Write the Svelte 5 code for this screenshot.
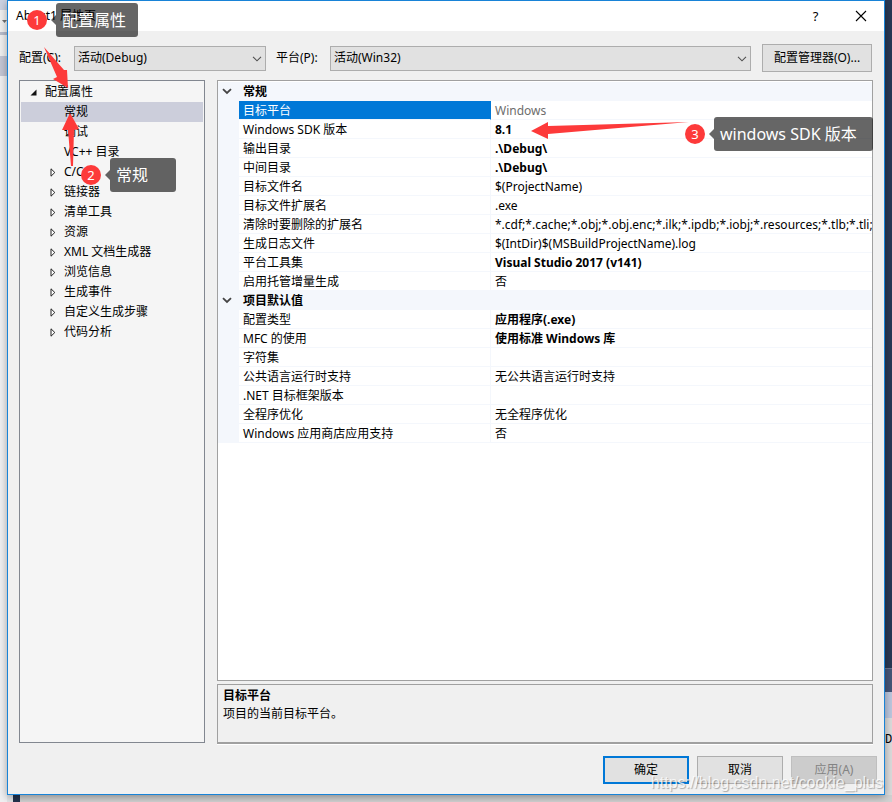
<script lang="ts">
  type Row = { name: string; value: string; bold?: boolean; muted?: boolean }

  const tree: { label: string; expandable?: boolean }[] = [
    { label: '常规' },
    { label: '调试' },
    { label: 'VC++ 目录' },
    { label: 'C/C++', expandable: true },
    { label: '链接器', expandable: true },
    { label: '清单工具', expandable: true },
    { label: '资源', expandable: true },
    { label: 'XML 文档生成器', expandable: true },
    { label: '浏览信息', expandable: true },
    { label: '生成事件', expandable: true },
    { label: '自定义生成步骤', expandable: true },
    { label: '代码分析', expandable: true },
  ]

  const groups: { title: string; rows: Row[] }[] = [
    {
      title: '常规',
      rows: [
        { name: '目标平台', value: 'Windows', muted: true },
        { name: 'Windows SDK 版本', value: '8.1', bold: true },
        { name: '输出目录', value: '.\\Debug\\', bold: true },
        { name: '中间目录', value: '.\\Debug\\', bold: true },
        { name: '目标文件名', value: '$(ProjectName)' },
        { name: '目标文件扩展名', value: '.exe' },
        { name: '清除时要删除的扩展名', value: '*.cdf;*.cache;*.obj;*.obj.enc;*.ilk;*.ipdb;*.iobj;*.resources;*.tlb;*.tli;*.t' },
        { name: '生成日志文件', value: '$(IntDir)$(MSBuildProjectName).log' },
        { name: '平台工具集', value: 'Visual Studio 2017 (v141)', bold: true },
        { name: '启用托管增量生成', value: '否' },
      ],
    },
    {
      title: '项目默认值',
      rows: [
        { name: '配置类型', value: '应用程序(.exe)', bold: true },
        { name: 'MFC 的使用', value: '使用标准 Windows 库', bold: true },
        { name: '字符集', value: '' },
        { name: '公共语言运行时支持', value: '无公共语言运行时支持' },
        { name: '.NET 目标框架版本', value: '' },
        { name: '全程序优化', value: '无全程序优化' },
        { name: 'Windows 应用商店应用支持', value: '否' },
      ],
    },
  ]

  let selectedNode = $state('常规')
  let selectedRow = $state('目标平台')
</script>

<div class="desktop">
  <div class="behind-left">
    <svg width="5" height="3" viewBox="0 0 5 3"><path d="M0 0H5L2.5 3Z" fill="#717171" /></svg>
  </div>
  <div class="behind-right"><span>D</span></div>
  <div class="behind-bottom"></div>

  <main class="dialog">
    <header class="titlebar">
      <h1>About1 属性页</h1>
      <button class="caption" aria-label="帮助">?</button>
      <button class="caption" aria-label="关闭">
        <svg width="12" height="12" viewBox="0 0 12 12"><path d="M1 1L11 11M11 1L1 11" fill="none" stroke="#000" stroke-width="1.1" /></svg>
      </button>
    </header>

    <div class="toolbar">
      <label for="config">配置(C):</label>
      <div class="combo config">
        <select id="config"><option>活动(Debug)</option></select>
        <svg width="10" height="6" viewBox="0 0 10 6"><path d="M1 .8L5 4.8L9 .8" fill="none" stroke="#505050" stroke-width="1.1" /></svg>
      </div>
      <label class="second" for="platform">平台(P):</label>
      <div class="combo platform">
        <select id="platform"><option>活动(Win32)</option></select>
        <svg width="10" height="6" viewBox="0 0 10 6"><path d="M1 .8L5 4.8L9 .8" fill="none" stroke="#505050" stroke-width="1.1" /></svg>
      </div>
      <button class="btn manager">配置管理器(O)...</button>
    </div>

    <div class="content">
      <nav class="tree">
        <div class="root">
          <svg width="7" height="7" viewBox="0 0 7 7"><path d="M6.5 .5V6.5H.5Z" fill="#111" /></svg>
          <span>配置属性</span>
        </div>
        <ul>
          {#each tree as node}
            <li>
              <button class:selected={node.label === selectedNode} onclick={() => (selectedNode = node.label)}>
                <span class="twisty">
                  {#if node.expandable}
                    <svg width="6" height="9" viewBox="0 0 6 9"><path d="M1 .8V8.2L4.8 4.5Z" fill="#fff" stroke="#222" /></svg>
                  {/if}
                </span>
                {node.label}
              </button>
            </li>
          {/each}
        </ul>
      </nav>

      <section class="detail">
        <div class="grid">
          <table>
            <colgroup><col class="c-gutter" /><col class="c-name" /><col /></colgroup>
            {#each groups as group}
              <tbody>
                <tr class="group">
                  <td class="gutter">
                    <svg width="10" height="7" viewBox="0 0 10 7"><path d="M1 1.2L5 5L9 1.2" fill="none" stroke="#444" stroke-width="1.8" /></svg>
                  </td>
                  <th colspan="2">{group.title}</th>
                </tr>
                {#each group.rows as row}
                  <tr class:active={row.name === selectedRow} onclick={() => (selectedRow = row.name)}>
                    <td class="gutter"></td>
                    <td class="name">{row.name}</td>
                    <td class="value" class:bold={row.bold} class:muted={row.muted}>{row.value}</td>
                  </tr>
                {/each}
              </tbody>
            {/each}
          </table>
        </div>
        <div class="description">
          <strong>目标平台</strong>
          <p>项目的当前目标平台。</p>
        </div>
      </section>
    </div>

    <footer>
      <button class="btn primary">确定</button>
      <button class="btn">取消</button>
      <button class="btn" disabled>应用(A)</button>
    </footer>
  </main>

  <svg class="arrow arrow-1" width="28" height="42" viewBox="0 0 28 42"><path d="M0 0L20 23L23 23L24 41L9 32L13 30Z" fill="#fd3a3a" /></svg>
  <svg class="arrow arrow-2" width="18" height="54" viewBox="0 0 18 54"><path d="M8 0L17 16L12 17L11 53H9L6 17H0Z" fill="#fd3a3a" /></svg>
  <svg class="arrow arrow-3" width="158" height="18" viewBox="0 0 158 18"><path d="M0 9L17 0V4L158 0L17 12V17Z" fill="#fd3a3a" /></svg>

  <div class="note note-1"><b>1</b><span>配置属性</span></div>
  <div class="note note-2"><b>2</b><span>常规</span></div>
  <div class="note note-3"><b>3</b><span>windows SDK 版本</span></div>

  <div class="watermark">https://blog.csdn.net/cookie_plus</div>
</div>

<style>
  :global(body) {
    margin: 0;
  }
  .desktop {
    position: relative;
    display: flex;
    box-sizing: border-box;
    min-height: 100vh;
    padding: 0 7px 7px;
    overflow: hidden;
    background: #e4e5e8;
    font: 12px/16px "Noto Sans", "Noto Sans CJK SC", sans-serif;
    color: #000;
  }
  .behind-left {
    position: absolute;
    inset: 0 auto 0 0;
    width: 7px;
    background: linear-gradient(#ccd2e2 0 10px, #f0f0f0 10px 32px, #b7bccb 32px 35px, #f0f0f0 35px 56px, #c4c6d4 56px 76px, #f0f0f2 76px);
  }
  .behind-left svg {
    position: absolute;
    top: 20px;
    left: 2px;
  }
  .behind-right {
    position: absolute;
    inset: 0 0 0 auto;
    width: 7px;
    background: linear-gradient(#293955 0 668px, #6a7690 668px 669px, #465678 669px 692px, #bcc7de 692px 718px, #dcdcdc 718px);
  }
  .behind-right span {
    position: absolute;
    top: 732px;
    left: 0;
    font-family: "Liberation Mono", monospace;
  }
  .behind-bottom {
    position: absolute;
    inset: auto 0 0 13px;
    height: 7px;
    background: #d2d2d2;
    border-left: 7px solid #25334e;
  }
  .dialog {
    position: relative;
    display: flex;
    flex: 1;
    flex-direction: column;
    min-width: 0;
    background: #f0f0f0;
    border: 1px solid #1883d7;
    box-shadow: 0 2px 8px rgba(0, 0, 0, 0.35);
  }
  button,
  select {
    font: inherit;
    color: inherit;
  }
  .titlebar {
    display: flex;
    align-items: center;
    height: 30px;
    padding: 0 1px 0 8px;
    background: #fff;
  }
  h1 {
    flex: 1;
    margin: 0;
    font-size: 12px;
    font-weight: 400;
  }
  .caption {
    display: flex;
    align-items: center;
    justify-content: center;
    width: 45px;
    height: 30px;
    padding: 0;
    background: none;
    border: 0;
    font-size: 13px;
  }
  .toolbar {
    display: flex;
    align-items: center;
    padding: 13px 12px 8px 11px;
  }
  .toolbar label {
    flex: none;
    width: 55px;
  }
  .toolbar .second {
    width: 54px;
    margin-left: 10px;
  }
  .combo {
    position: relative;
    min-width: 0;
  }
  .combo.config {
    flex: 192 1 0;
  }
  .combo.platform {
    flex: 421 1 0;
  }
  select {
    display: block;
    width: 100%;
    height: 25px;
    padding: 0 20px 0 3px;
    appearance: none;
    background: #e1e1e1;
    border: 1px solid #adadad;
    border-radius: 0;
  }
  .combo svg {
    position: absolute;
    top: 10px;
    right: 4px;
    pointer-events: none;
  }
  .btn {
    width: 86px;
    height: 28px;
    padding: 0;
    background: #e1e1e1;
    border: 1px solid #adadad;
  }
  .btn.manager {
    flex: none;
    width: 110px;
    margin-left: 11px;
  }
  .btn.primary {
    border: 2px solid #0078d7;
  }
  .btn:disabled {
    color: #838383;
    background: #ccc;
    border-color: #bfbfbf;
  }
  .content {
    display: flex;
    flex: 1;
    gap: 12px;
    padding: 0 11px;
  }
  .tree {
    flex: none;
    box-sizing: border-box;
    width: 186px;
    margin-bottom: 1px;
    padding: 1px;
    background: #f5f5f5;
    border: 1px solid #828790;
  }
  .root {
    display: flex;
    align-items: center;
    gap: 8px;
    height: 20px;
    padding-left: 9px;
  }
  ul {
    margin: 0;
    padding: 0;
    list-style: none;
  }
  .tree button {
    display: flex;
    align-items: center;
    width: 100%;
    height: 20px;
    padding: 0 0 0 27px;
    background: none;
    border: 0;
  }
  .tree button.selected {
    background: #cccedb;
  }
  .twisty {
    display: flex;
    box-sizing: border-box;
    width: 16px;
    padding-left: 2px;
  }
  .detail {
    display: flex;
    flex: 1;
    flex-direction: column;
    gap: 3px;
    min-width: 0;
  }
  .grid {
    flex: 1;
    padding-top: 1px;
    overflow: hidden;
    background: #fff;
    border: 1px solid #a0a0a0;
  }
  table {
    width: 100%;
    table-layout: fixed;
    border-spacing: 0;
  }
  .c-gutter {
    width: 21px;
  }
  .c-name {
    width: 252px;
  }
  td,
  th {
    box-sizing: border-box;
    height: 19px;
    padding: 2px 0 0 4px;
    overflow: hidden;
    line-height: 16px;
    text-align: left;
    white-space: nowrap;
    border-bottom: 1px solid #f4f7fc;
  }
  .name {
    border-right: 1px solid #f4f7fc;
  }
  .group th,
  .gutter {
    background: #f4f7fc;
  }
  .gutter {
    padding-top: 0;
  }
  .gutter svg {
    display: block;
  }
  .active .name {
    color: #fff;
    background: #0078d7;
    border-right-color: #0078d7;
  }
  .bold {
    font-weight: 700;
  }
  .muted {
    color: #6d6d6d;
  }
  .description {
    box-sizing: border-box;
    height: 60px;
    padding: 2px 5px;
    border: 1px solid #a0a0a0;
    border-bottom-width: 2px;
    box-shadow: 0 1px #fff;
    line-height: 18px;
  }
  .description p {
    margin: 0;
  }
  footer {
    display: flex;
    justify-content: flex-end;
    gap: 8px;
    padding: 12px 7px 10px;
  }
  .arrow {
    position: absolute;
    pointer-events: none;
  }
  .arrow-1 {
    top: 47px;
    left: 44px;
  }
  .arrow-2 {
    top: 113px;
    left: 62px;
  }
  .arrow-3 {
    top: 122px;
    left: 531px;
  }
  .note {
    position: absolute;
    display: flex;
    align-items: center;
    color: #fff;
    font-size: 16px;
  }
  .note b {
    width: 20px;
    margin-right: 9px;
    border-radius: 50%;
    background: #fd3a3a;
    font-size: 13px;
    font-weight: 400;
    line-height: 20px;
    text-align: center;
  }
  .note span {
    position: relative;
    box-sizing: border-box;
    height: 34px;
    padding: 0 6px;
    border-radius: 3px;
    background: rgba(0, 0, 0, 0.6);
    line-height: 34px;
    white-space: nowrap;
  }
  .note span::before {
    content: "";
    position: absolute;
    top: 12px;
    left: -5px;
    border: solid transparent;
    border-width: 5px 5px 5px 0;
    border-right-color: rgba(0, 0, 0, 0.6);
  }
  .note-1 {
    top: 3px;
    left: 27px;
  }
  .note-1 span {
    width: 82px;
  }
  .note-2 {
    top: 158px;
    left: 81px;
  }
  .note-2 span {
    width: 66px;
  }
  .note-3 {
    top: 117px;
    left: 685px;
  }
  .note-3 span {
    width: 159px;
  }
  .watermark {
    position: absolute;
    right: 9px;
    bottom: 10px;
    color: rgba(255, 255, 255, 0.8);
    font: 16px/18px "Liberation Sans", sans-serif;
    text-shadow: 1px 1px 1px rgba(0, 0, 0, 0.3);
    pointer-events: none;
  }
</style>
